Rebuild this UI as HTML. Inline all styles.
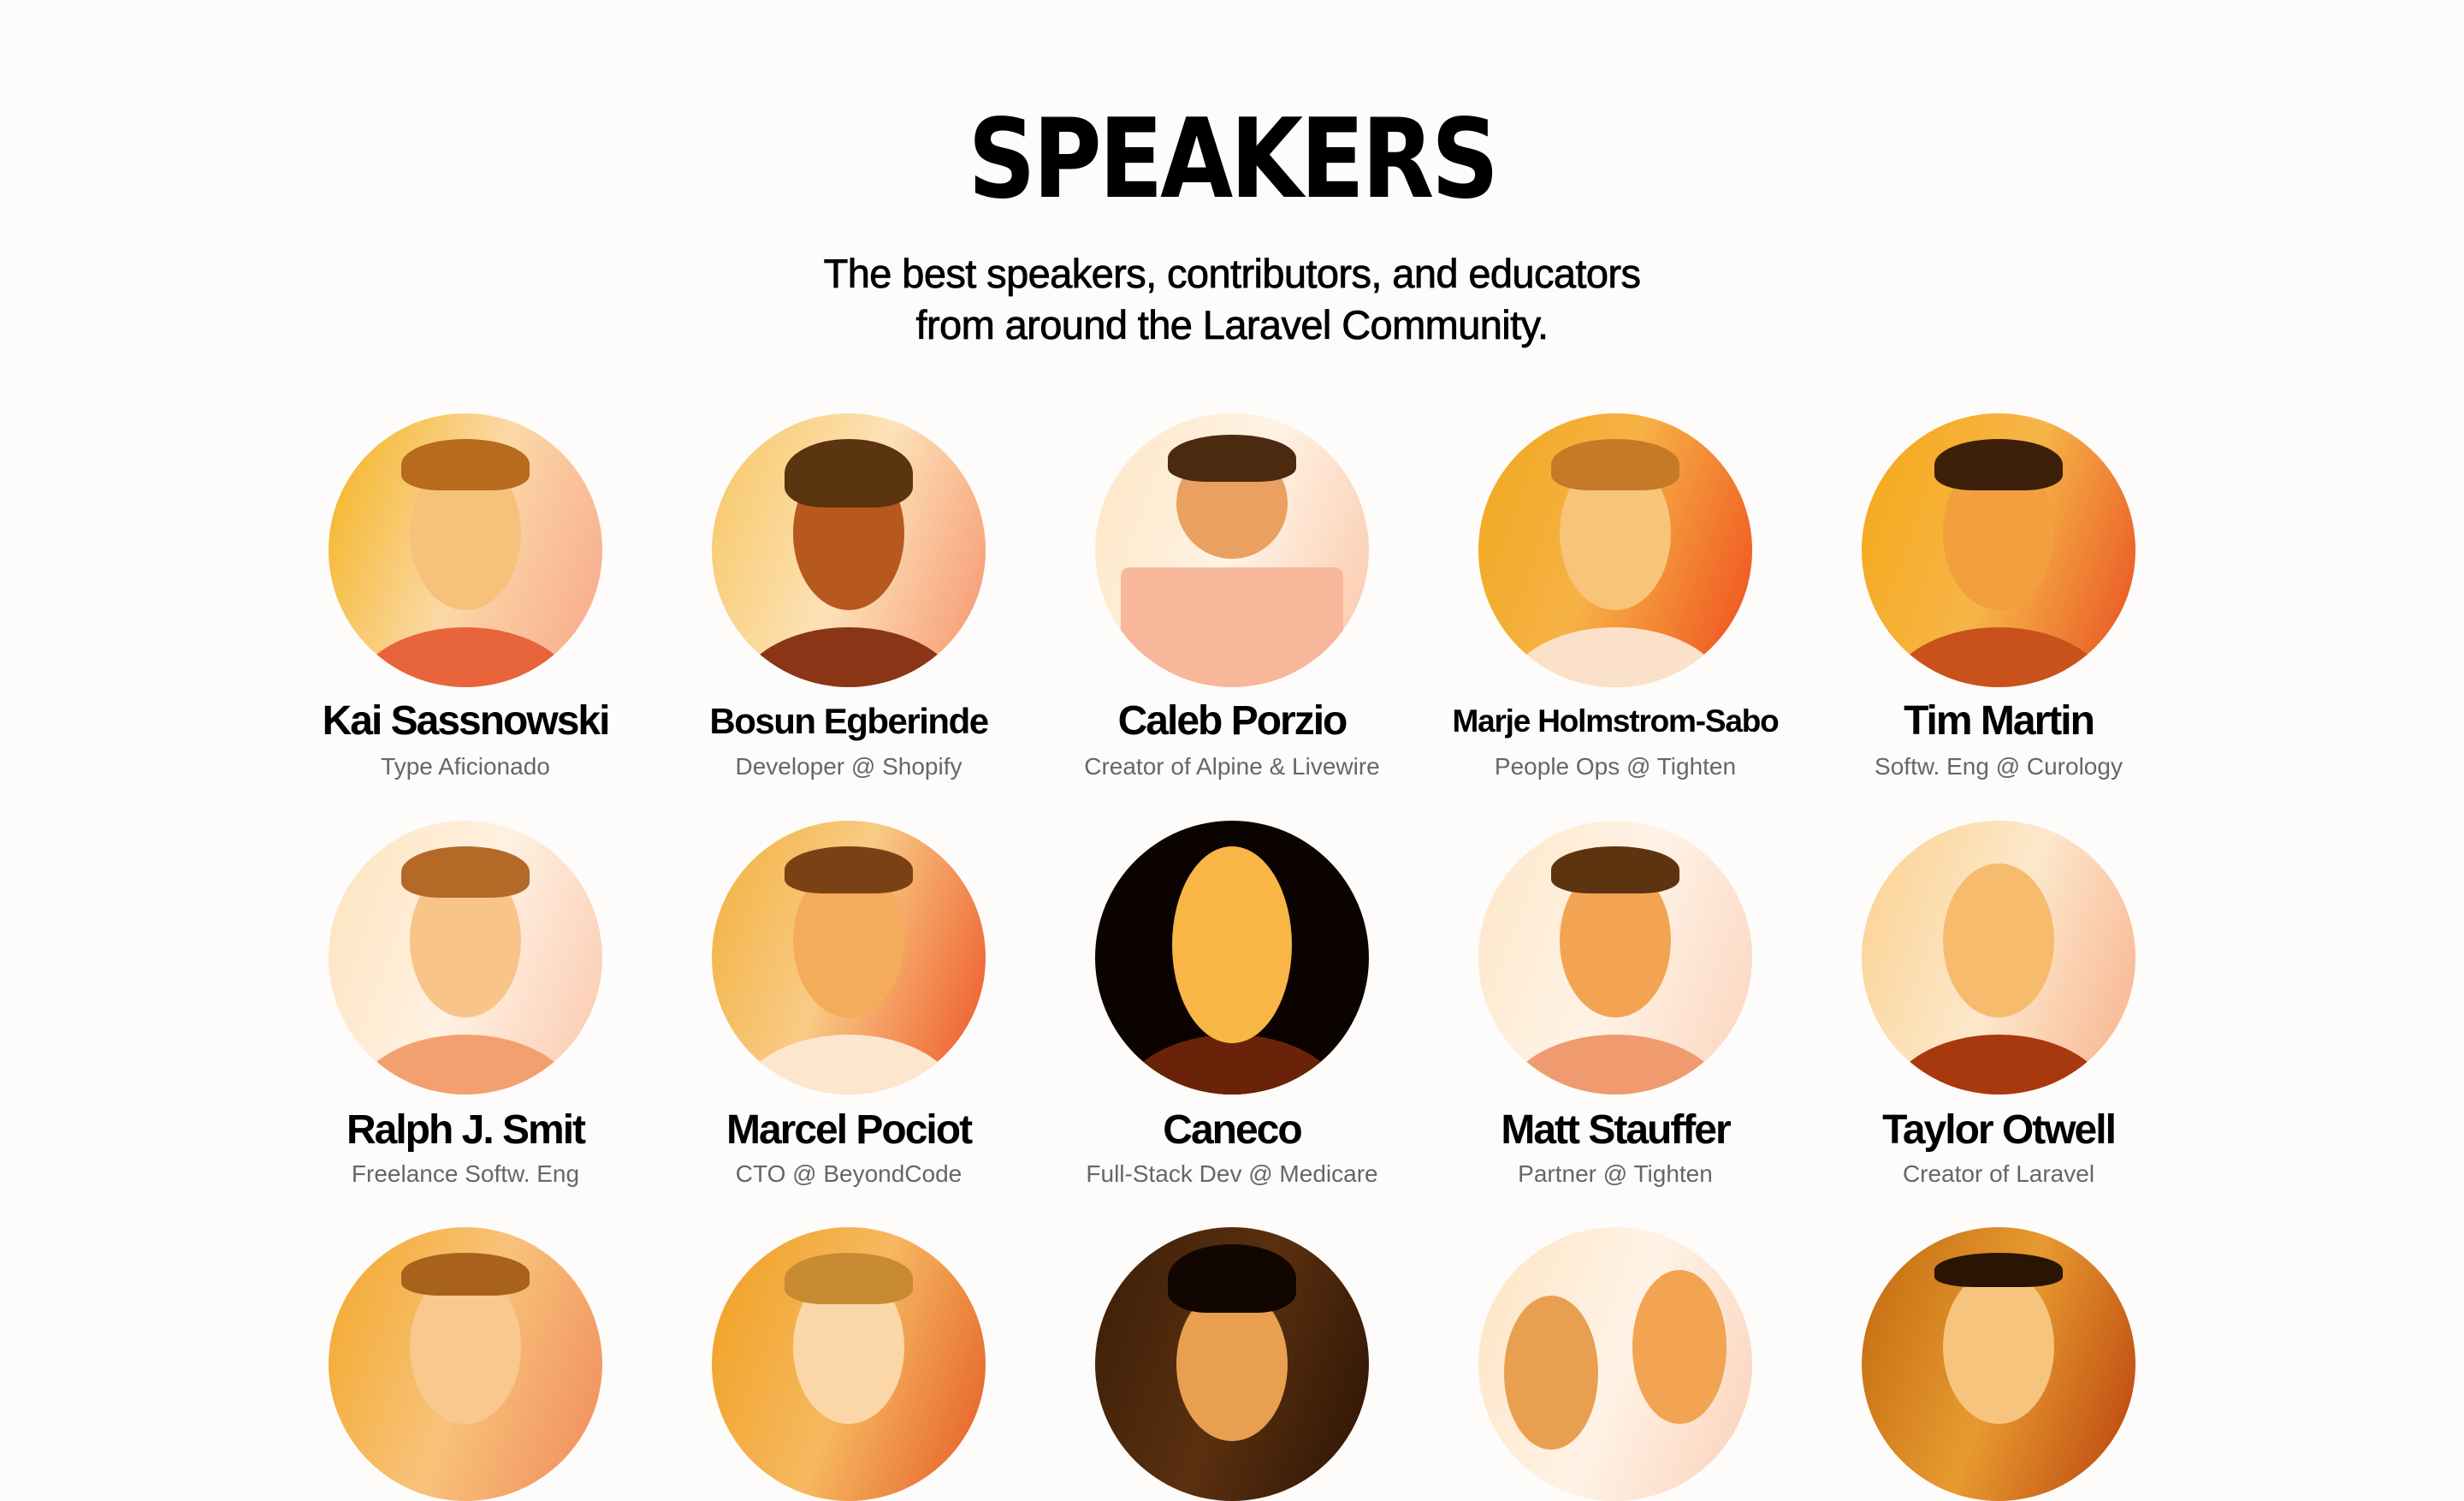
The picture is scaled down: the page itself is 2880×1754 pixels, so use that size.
<!DOCTYPE html>
<html><head><meta charset="utf-8"><style>
html,body{margin:0;padding:0;}
body{width:2880px;height:1600px;overflow:hidden;background:#fdfcfb;font-family:"Liberation Sans",sans-serif;position:relative;}
h1{position:absolute;left:0;width:2880px;top:112px;margin:0;text-align:center;font-family:"DejaVu Sans","Liberation Sans",sans-serif;font-weight:bold;font-size:128px;line-height:150px;letter-spacing:-4px;color:#000;transform:scaleX(0.86);transform-origin:center;}
.sub{position:absolute;left:0;width:2880px;top:290px;text-align:center;font-size:47px;line-height:60px;color:#000;letter-spacing:-0.6px;-webkit-text-stroke:0.8px #000;}
.c{position:absolute;width:320px;height:320px;border-radius:50%;overflow:hidden;}
.c .head{position:absolute;left:95px;top:50px;width:130px;height:180px;border-radius:50%;}
.c .hair{position:absolute;left:85px;top:30px;width:150px;height:80px;border-radius:50% 50% 30% 30%;}
.c .sh{position:absolute;left:30px;top:250px;width:260px;height:160px;border-radius:50%;}
.n{position:absolute;width:448px;text-align:center;font-weight:bold;font-size:48px;letter-spacing:-2px;color:#000;line-height:56px;}
.r{position:absolute;width:448px;text-align:center;font-size:28px;color:#666;line-height:34px;}
</style></head><body>
<h1>SPEAKERS</h1>
<div class="sub">The best speakers, contributors, and educators<br>from around the Laravel Community.</div>

<div class="c" style="left:384px;top:483px;background:linear-gradient(110deg,#f3b21a,#fbd9a6 50%,#f8a58a)"><div class="sh" style="background:#e8643a"></div><div class="head" style="background:#f6c17b"></div><div class="hair" style="background:#b86a1d;height:60px"></div></div>
<div class="c" style="left:832px;top:483px;background:linear-gradient(110deg,#f7c660,#fde2b8 50%,#f5926c)"><div class="sh" style="background:#8a3515"></div><div class="head" style="background:#b7581e"></div><div class="hair" style="background:#5a3510"></div></div>
<div class="c" style="left:1280px;top:483px;background:linear-gradient(110deg,#fde6c4,#fff3e4 50%,#fbc6a8)"><div class="sh" style="background:#f6b79a;top:180px;height:200px;border-radius:10px"></div><div class="head" style="background:#e9a060;top:40px;height:130px"></div><div class="hair" style="background:#4c2a10;top:25px;height:55px"></div></div>
<div class="c" style="left:1728px;top:483px;background:linear-gradient(110deg,#f0a81c,#f6b246 45%,#ef4a1c)"><div class="sh" style="background:#fbe1c8"></div><div class="head" style="background:#f8c47a"></div><div class="hair" style="background:#c67a28;height:60px"></div></div>
<div class="c" style="left:2176px;top:483px;background:linear-gradient(110deg,#f5a816,#f6b548 50%,#e84c20)"><div class="sh" style="background:#c9521c"></div><div class="head" style="background:#f2a03e"></div><div class="hair" style="background:#3c200a;height:60px"></div></div>

<div class="n" style="left:320px;top:815px">Kai Sassnowski</div><div class="r" style="left:320px;top:879px">Type Aficionado</div>
<div class="n" style="left:768px;top:815px;font-size:42px;letter-spacing:-1.5px">Bosun Egberinde</div><div class="r" style="left:768px;top:879px">Developer @ Shopify</div>
<div class="n" style="left:1216px;top:815px">Caleb Porzio</div><div class="r" style="left:1216px;top:879px">Creator of Alpine &amp; Livewire</div>
<div class="n" style="left:1664px;top:815px;font-size:37px;letter-spacing:-1.2px">Marje Holmstrom-Sabo</div><div class="r" style="left:1664px;top:879px">People Ops @ Tighten</div>
<div class="n" style="left:2112px;top:815px">Tim Martin</div><div class="r" style="left:2112px;top:879px">Softw. Eng @ Curology</div>

<div class="c" style="left:384px;top:959px;background:linear-gradient(110deg,#fde3bc,#fff1e2 50%,#fbc7ad)"><div class="sh" style="background:#f3a070"></div><div class="head" style="background:#f8c488"></div><div class="hair" style="background:#b46a26;height:60px"></div></div>
<div class="c" style="left:832px;top:959px;background:linear-gradient(110deg,#f3b03c,#f8cb86 45%,#ee5224)"><div class="sh" style="background:#fde6d0"></div><div class="head" style="background:#f4ab5a"></div><div class="hair" style="background:#7a4214;height:55px"></div></div>
<div class="c" style="left:1280px;top:959px;background:#0a0300"><div class="sh" style="background:#6a2208"></div><div class="head" style="background:#f7b646;top:30px;height:230px;left:90px;width:140px"></div></div>
<div class="c" style="left:1728px;top:959px;background:linear-gradient(110deg,#fde6c8,#fff3e6 50%,#fbd3bc)"><div class="sh" style="background:#f09a70"></div><div class="head" style="background:#f3a452"></div><div class="hair" style="background:#5c3410;height:55px"></div></div>
<div class="c" style="left:2176px;top:959px;background:linear-gradient(110deg,#fbd08c,#fde8cc 50%,#f7b08c)"><div class="sh" style="background:#a8380e"></div><div class="head" style="background:#f7bb6e"></div></div>

<div class="n" style="left:320px;top:1293px">Ralph J. Smit</div><div class="r" style="left:320px;top:1355px">Freelance Softw. Eng</div>
<div class="n" style="left:768px;top:1293px">Marcel Pociot</div><div class="r" style="left:768px;top:1355px">CTO @ BeyondCode</div>
<div class="n" style="left:1216px;top:1293px">Caneco</div><div class="r" style="left:1216px;top:1355px">Full-Stack Dev @ Medicare</div>
<div class="n" style="left:1664px;top:1293px">Matt Stauffer</div><div class="r" style="left:1664px;top:1355px">Partner @ Tighten</div>
<div class="n" style="left:2112px;top:1293px">Taylor Otwell</div><div class="r" style="left:2112px;top:1355px">Creator of Laravel</div>

<div class="c" style="left:384px;top:1434px;background:linear-gradient(110deg,#f3a82a,#f8c27a 50%,#f08a5c)"><div class="head" style="background:#f8c88e"></div><div class="hair" style="background:#a8621c;height:50px"></div></div>
<div class="c" style="left:832px;top:1434px;background:linear-gradient(110deg,#f0a020,#f6b860 50%,#e45a24)"><div class="head" style="background:#fbd7a8"></div><div class="hair" style="background:#c98a34;height:60px"></div></div>
<div class="c" style="left:1280px;top:1434px;background:linear-gradient(110deg,#3a1e08,#5a3010 50%,#2c1404)"><div class="head" style="background:#e8a050;top:70px"></div><div class="hair" style="background:#120600;height:80px;top:20px"></div></div>
<div class="c" style="left:1728px;top:1434px;background:linear-gradient(110deg,#fde4c2,#fff3e6 50%,#fbd0b8)"><div class="head" style="background:#f2a452;left:180px;width:110px"></div><div class="head" style="background:#e8a050;left:30px;width:110px;top:80px"></div></div>
<div class="c" style="left:2176px;top:1434px;background:linear-gradient(110deg,#c06a10,#e89a30 50%,#b8400c)"><div class="head" style="background:#f7c47e"></div><div class="hair" style="background:#2a1404;height:40px"></div></div>
</body></html>
